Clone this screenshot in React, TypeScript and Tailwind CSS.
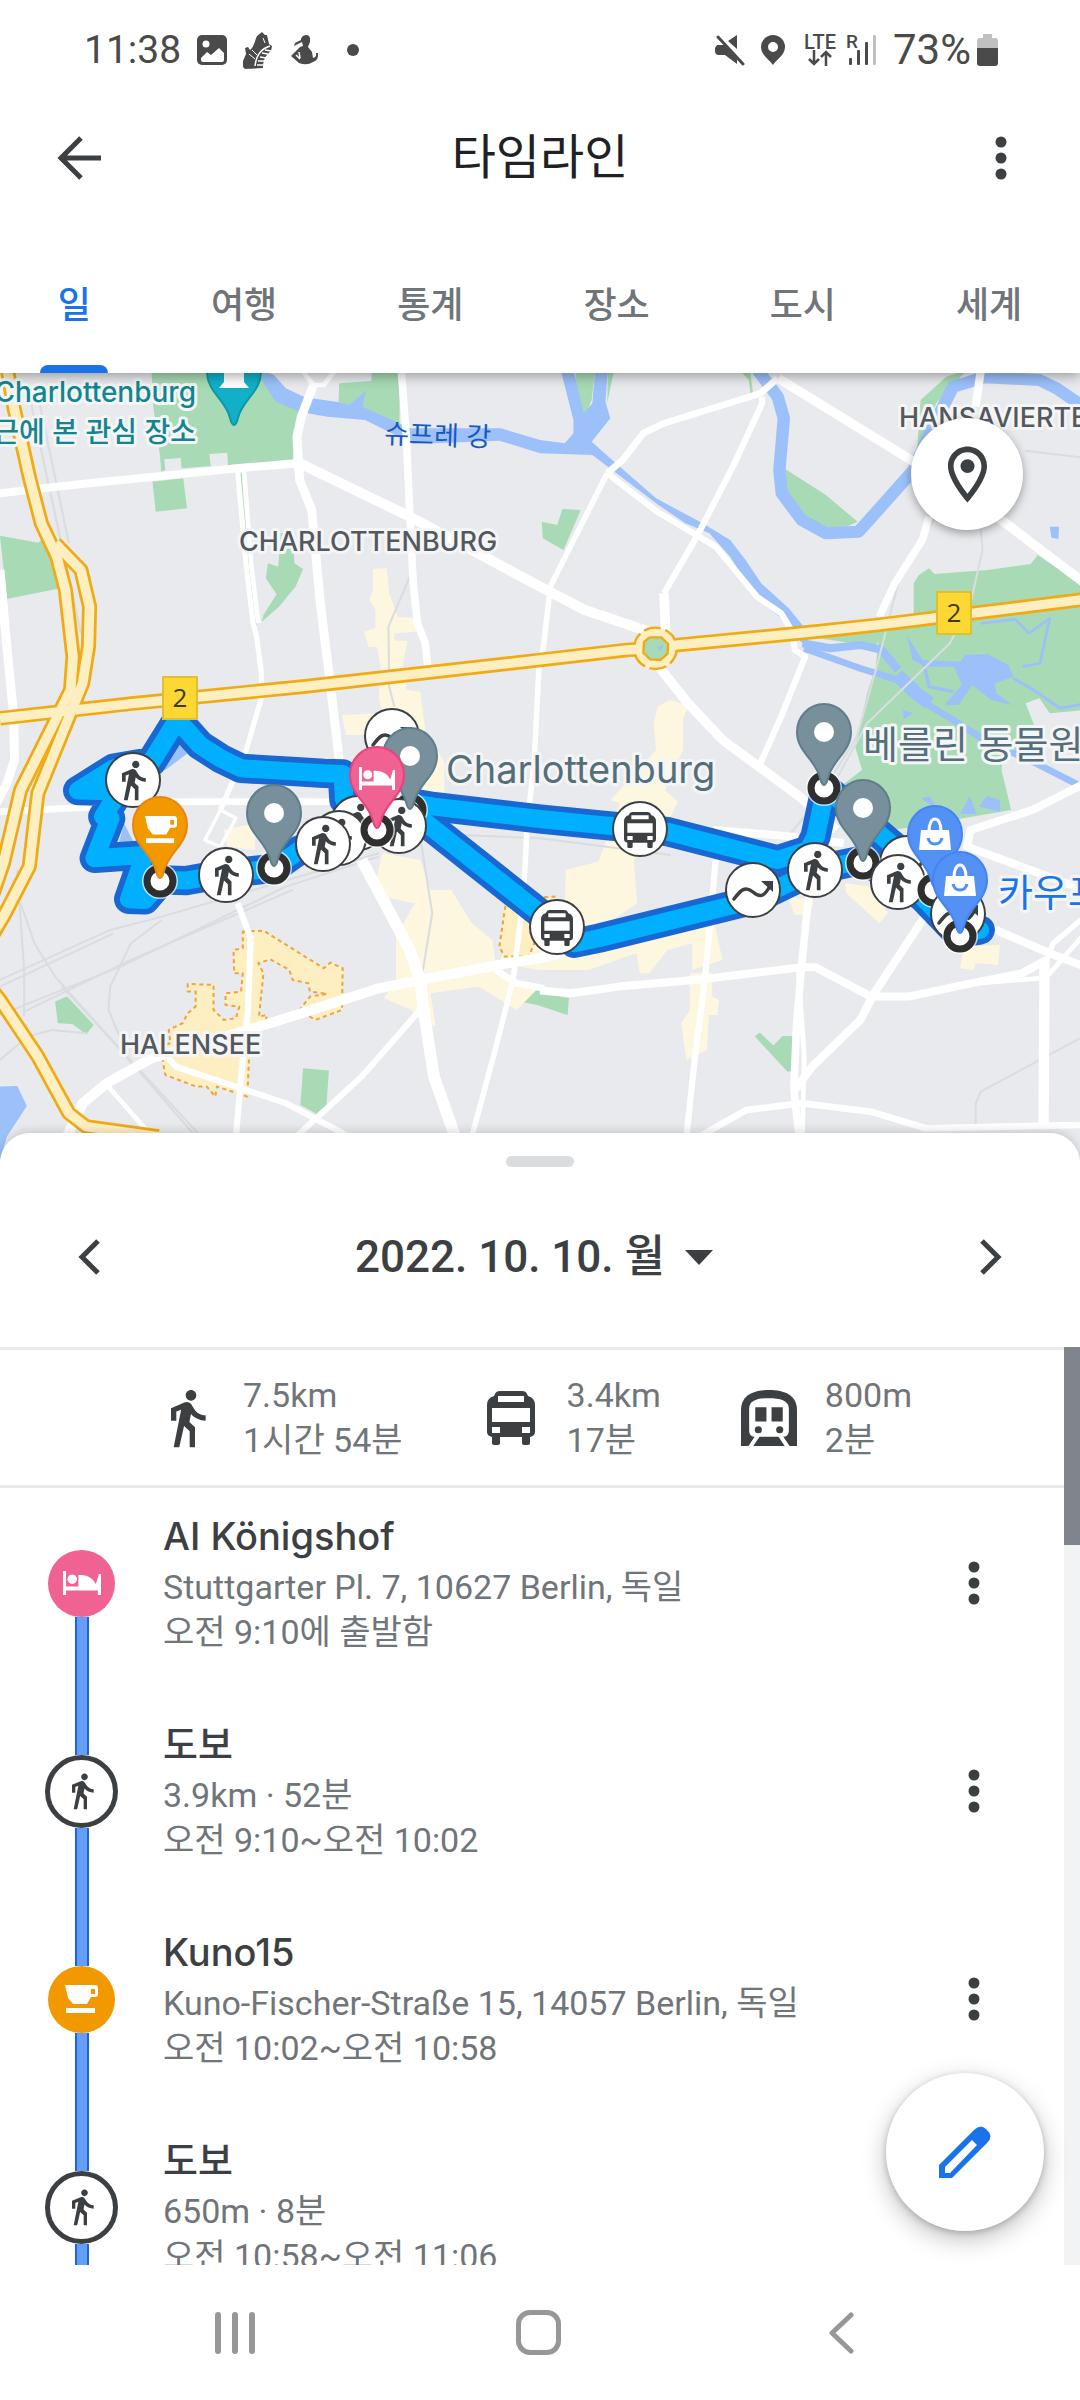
import type { ReactNode } from "react";
import { MdDirectionsWalk, MdOutlineLocationOn } from "react-icons/md";

const TABS = ["일", "여행", "통계", "장소", "도시", "세계"];

const STATS = [
  { kind: "walk", distance: "7.5km", time: "1시간 54분" },
  { kind: "bus", distance: "3.4km", time: "17분" },
  { kind: "train", distance: "800m", time: "2분" },
];

const ENTRIES = [
  { kind: "hotel", title: "AI Königshof", detail: "Stuttgarter Pl. 7, 10627 Berlin, 독일", time: "오전 9:10에 출발함" },
  { kind: "walk", title: "도보", detail: "3.9km · 52분", time: "오전 9:10~오전 10:02" },
  { kind: "cafe", title: "Kuno15", detail: "Kuno-Fischer-Straße 15, 14057 Berlin, 독일", time: "오전 10:02~오전 10:58" },
  { kind: "walk", title: "도보", detail: "650m · 8분", time: "오전 10:58~오전 11:06" },
];

// Road geometry, [stroke width, points]
const ROADS: [number, string][] = [
  [24, "0,370 210,345 690,295 870,280"],
  [30, "870,280 1190,440 1568,650 1698,720 1898,790"],
  [26, "910,45 875,140 862,200 870,330 905,420 930,700 960,950 985,1170"],
  [22, "1165,0 1180,200 1190,440 1200,640 1212,760 1235,820 1242,890"],
  [15, "690,300 715,590 735,760 745,800 758,900 760,980 715,1140 640,1320"],
  [14, "708,300 730,590 750,760"],
  [26, "0,600 20,830 40,1040 42,1170 20,1240 -10,1300"],
  [14, "880,5 910,45 940,45 970,5"],
  [20, "0,1325 300,1310 500,1295 960,1295"],
  [24, "2070,1380 2300,1400 2450,1420"],
  [10, "640,1320 685,1345 640,1430 595,1410 640,1320"],
  [18, "690,1600 728,1705 720,1920 700,2120 685,2300"],
  [30, "190,2310 240,2200 310,2140 440,2065 640,2005 830,1945 1100,1855 1220,1830 1500,1775 1568,1765 1640,1745"],
  [34, "1050,1470 1190,1740 1220,1830 1230,1920 1260,2120 1325,2310"],
  [18, "1220,1920 1050,2120 860,2300"],
  [18, "490,2065 510,2090 830,2200 1015,2300"],
  [14, "310,2145 425,2280"],
  [16, "1763,310 1598,650 1578,830 1565,890 1552,1160 1530,1380 1520,1580 1490,1830 1430,2070 1370,2300"],
  [20, "1440,1800 1500,1840 1580,1855"],
  [28, "2260,25 2653,275 2908,450 3028,545 3150,640"],
  [20, "2258,25 2208,70 1928,160 1868,190 1808,270 1763,310"],
  [18, "2213,80 2213,100 2128,290 2023,500 1928,670"],
  [28, "1928,670 1933,790"],
  [18, "1763,310 1908,425 2078,530 2198,680 2268,730 2298,780 2308,840 2338,860 2268,1040 2208,1180"],
  [24, "2848,0 2833,110"],
  [22, "2698,440 2678,510 2598,640 2553,740"],
  [28, "1913,890 1998,1000 2098,1110 2328,1285 2428,1380"],
  [24, "1568,1862 1658,1870 1798,1850 2038,1828 2328,1792 2368,1792 2528,1880 2638,1880 2798,1845 2968,1810 3038,1770"],
  [22, "2348,1580 2328,1780 2313,1960 2305,2160 2320,2300"],
  [14, "2318,1800 2335,2060 2330,2290"],
  [24, "2698,1620 2538,1870 2498,1950 2358,2090 2308,2160"],
  [18, "2078,1470 2048,1820 2018,2060 1993,2300"],
  [24, "3150,1240 2998,1320 2818,1380 2808,1430 3018,1510 3150,1560"],
  [24, "2858,1665 3048,1750 3150,1790"],
  [30, "3033,1770 3030,2270"],
  [16, "3150,1640 3058,1720 3035,1780"],
  [14, "3150,1690 3040,1820"],
  [20, "2030,2300 2168,2220 2328,2200 2528,2225 2688,2275 3150,2265"],
  [14, "2778,1845 3018,1825"],
];

const RAILS = [
  "0,1830 320,1680 470,1640 1100,1450",
  "0,1850 330,1690",
  "0,1935 350,1790 830,1550 1100,1460",
  "70,1925 380,1770 850,1560",
  "60,1600 100,1720 160,1820 350,2040 560,2290",
  "50,1500 70,1800 70,1940",
  "180,1850 360,2050 575,2290",
  "0,2070 80,2000 150,1980 250,1990",
  "320,1850 315,1920 380,2080",
  "320,1850 380,1720 470,1650",
  "90,100 235,790",
  "115,100 200,520",
  "1190,620 1128,770 1130,950 1145,1010",
  "1220,1400 1255,1630 1225,1820",
  "1340,1395 1568,1405 1948,1455",
  "2718,440 2618,600 2543,900 2488,1100 2368,1300 2288,1400",
  "2848,480 2853,540 2818,700 2758,820 2518,1060 2400,1280",
  "3136,2005 2848,2165 2833,2200 2833,2270",
  "2978,242 3136,262",
];

const HIGHWAYS = [
  "20,-10 40,110 85,320 120,460 165,560 190,660 212,860 205,960 60,1260 10,1480 -30,1600",
  "160,520 235,600 260,710 257,830 240,940 110,1270 85,1490 10,1640 -30,1710",
  "-30,1850 0,1890 110,2060 200,2230 250,2270 460,2300",
  "0,1045 390,1000 880,950 1568,870 1820,840 1903,835 1968,825 2368,785 2548,765 3150,688",
];

const ROUTES = [
  "1000,1290 995,1212 940,1210 860,1205 700,1195 640,1165 580,1125 515,1050 440,1175 330,1195 227,1262 345,1265 300,1340 320,1345 275,1465 420,1455 375,1588 420,1590 470,1530 540,1532 660,1510 795,1495 870,1440 960,1410 1095,1380",
  "1200,1300 1260,1310 1568,1347 1938,1385 2258,1470 2348,1440 2368,1400 2398,1255 2608,1440 2760,1640",
  "1220,1345 1568,1630 1668,1720 1738,1705 2188,1590 2268,1550 2368,1500 2508,1470 2678,1580 2780,1690 2845,1680",
];

function Poly({ fill, points }: { fill: string; points: string[] }) {
  return (
    <g fill={fill}>
      {points.map((p) => (
        <polygon key={p} points={p} />
      ))}
    </g>
  );
}

function BedIcon({ x = 0, y = 0, size = 37 }) {
  return (
    <svg x={x} y={y} width={size} height={(size * 24) / 37} viewBox="0 0 37 24" fill="#fff">
      <path d="M0 0h3v15h12V4c9-1 15 4 17 9l3-10h2v21h-3v-5H3v5H0z" />
      <circle cx="9" cy="8" r="4.6" />
    </svg>
  );
}

function CupIcon({ x = 0, y = 0, size = 33 }) {
  return (
    <svg x={x} y={y} width={size} height={(size * 28) / 33} viewBox="0 0 33 28" fill="#fff">
      <path fillRule="evenodd" d="M0 0h30q3 0 3 3v6q0 3-3 3h-4l-4 7H8L3 13zM26 4v5h4V4z" />
      <path d="M1 23h29v5H1z" />
    </svg>
  );
}

function BusIcon({ x = 0, y = 0, size = 48 }) {
  return (
    <svg x={x} y={y} width={size} height={(size * 54) / 48} viewBox="0 0 48 54" fill="#3c4043">
      <path
        fillRule="evenodd"
        d="M8 3q1-3 5-3h22q4 0 5 3l1 2q7 2 7 9v27q0 4-5 5v6q0 2-2 2h-4q-2 0-2-2v-6H13v6q0 2-2 2H7q-2 0-2-2v-6q-5-1-5-5V14q0-7 7-9zM11 5v6h26V5zM5 17v14h38V17zM5 36v6h8v-6zM35 36v6h8v-6z"
      />
    </svg>
  );
}

function TrainIcon() {
  return (
    <svg width="56" height="56" viewBox="0 0 55 55" fill="#3c4043">
      <path d="M0 55V20C0 5 12 0 27.500 0S55 5 55 20v35z" />
      <path fill="#fff" d="M8 40V18C8 10 17 8 27.500 8S47 10 47 18v22q0 6-6 6H14q-6 0-6-6z" />
      <path d="M14 17h11v14H14zM30 17h11v14H30z" />
      <circle cx="17" cy="39" r="3.500" />
      <circle cx="38" cy="39" r="3.500" />
      <path stroke="#fff" strokeWidth="4" d="M17 44l-8 12M38 44l8 12" />
    </svg>
  );
}

function MoreIcon() {
  return (
    <svg width="12" height="44" viewBox="0 0 12 44" fill="#3c4043">
      <circle cx="6" cy="6" r="5.500" />
      <circle cx="6" cy="22" r="5.500" />
      <circle cx="6" cy="38" r="5.500" />
    </svg>
  );
}

function Stop({ x, y, kind }: { x: number; y: number; kind: string }) {
  return (
    <g>
      <circle cx={x} cy={y} r="27" fill="#fff" stroke="#3c4043" strokeWidth="2" />
      {kind === "walk" && <MdDirectionsWalk x={x - 22} y={y - 22} size={44} color="#3c4043" />}
      {kind === "bus" && <BusIcon x={x - 16} y={y - 17} size={32} />}
      {kind === "wave" && (
        <g transform={`translate(${x} ${y})`}>
          <path d="M-19 9C-13 1-8-5 0 2S12 5 17-4" fill="none" stroke="#3c4043" strokeWidth="3.500" strokeLinecap="round" />
          <path d="M8-9h12V2z" fill="#3c4043" />
        </g>
      )}
    </g>
  );
}

function Ring({ x, y }: { x: number; y: number }) {
  return (
    <g>
      <circle cx={x} cy={y} r="18" fill="#fff" fillOpacity="0.700" />
      <circle cx={x} cy={y} r="13" fill="#fff" stroke="#2f2f2f" strokeWidth="7" />
    </g>
  );
}

function Pin({ x, y, fill, edge, children }: { x: number; y: number; fill: string; edge: string; children?: ReactNode }) {
  return (
    <g transform={`translate(${x} ${y})`}>
      <path
        d="M0 53C-2 53-3 50-4 46C-8 28-27 20-27 0A27 28 0 0 1 27 0C27 20 8 28 4 46C3 50 2 53 0 53Z"
        fill={fill}
        stroke={edge}
        strokeWidth="2"
      />
      {children ?? <circle cx="0" cy="0" r="10" fill="#fff" />}
    </g>
  );
}

function Bag() {
  return (
    <g>
      <path d="M-14-4h28l2 20h-32z" fill="#fff" />
      <path d="M-6-3c0-16 12-16 12 0" fill="none" stroke="#fff" strokeWidth="3" />
      <path d="M-7 4c2 8 12 8 14 0" fill="none" stroke="#4f8ff7" strokeWidth="3" />
    </g>
  );
}

function RoadShield({ x, y }: { x: number; y: number }) {
  return (
    <g>
      <rect x={x - 17} y={y - 21} width="34" height="42" fill="#fdd835" stroke="#dfbf35" strokeWidth="2" />
      <text x={x} y={y + 9} fontSize="26" textAnchor="middle" fill="#3c3a20" fontFamily='"Open Sans", sans-serif'>
        2
      </text>
    </g>
  );
}

function TimelineMap() {
  return (
    <svg className="block h-full w-full" viewBox="0 373 1080 787" preserveAspectRatio="xMidYMin slice" role="img" aria-label="지도">
      <rect y="373" width="1080" height="787" fill="#e8eaed" />
      <g transform="translate(0 370) scale(0.3444 0.3333)" strokeLinejoin="round">
        <Poly
          fill="#a8dab5"
          points={[
            "440,0 445,110 465,260 468,305 480,300 477,268 525,264 527,295 612,288 608,252 660,248 662,285 850,268 860,190 885,110 800,90 760,0",
            "443,335 532,325 543,415 452,425",
            "0,497 112,518 125,505 175,655 20,687",
            "815,490 850,490 855,580 880,597 858,650 810,710 760,755 765,735 803,673 772,625 778,580 808,590",
            "985,40 1078,33 1080,0 1160,0 1160,160 1060,120 983,97",
            "695,310 705,310 745,765 738,765",
            "1673,0 1728,0 1718,90 1698,140 1668,60",
            "1765,0 1783,0 1763,100",
            "2148,0 2178,0 2186,65 2180,75 2174,30",
            "2280,297 2398,375 2490,455 2458,470 2398,472 2343,450 2280,370",
            "2673,90 2748,20 2808,0 2718,100 2663,240",
            "1573,455 1618,465 1633,417 1686,420 1636,540 1576,505",
            "2653,640 2668,615 2698,595 2713,612 2868,600 2993,582 3013,555 3150,650 3150,1020 3048,1030 3018,985 2978,1000 3008,1080 2968,1140 2913,1150 2908,1200 2936,1320 2628,1375 2578,1380 2440,1250 2503,1200 2483,1130 2518,970 2543,890 2553,780 2653,760",
            "2348,800 2560,785 2543,830",
            "160,1895 195,1880 272,1965 250,1993 210,1962 168,1960",
            "880,2095 955,2102 948,2205 920,2232 872,2205",
            "1495,1845 1652,1885 1648,1935 1560,1905 1485,1890",
            "2192,2000 2206,1988 2246,2027 2272,1998 2305,1998 2298,2105 2286,2105",
          ]}
        />
        <Poly
          fill="#fef7e0"
          points={[
            "1083,597 1123,595 1130,670 1155,740 1210,745 1210,785 1145,790 1145,812 1183,812 1170,880 1180,960 1220,965 1235,1080 1290,1175 1290,1270 1200,1270 1100,1095 1005,1095 993,1035 1110,1030 1100,980 1105,890 1095,830 1070,830 1057,785 1090,775 1090,720 1072,690 1083,660",
            "1110,1450 1220,1470 1250,1560 1310,1560 1370,1660 1430,1710 1440,1790 1480,1830 1568,1850 1500,1920 1390,1850 1250,1870 1265,1970 1230,1960 1195,1920 1115,1885 1150,1830 1150,1700 1205,1600 1105,1580 1095,1520",
            "1910,1010 1945,990 1998,1005 1983,1050 1983,1140 1930,1260 1968,1295 1938,1360 1840,1470 1850,1600 1720,1690 2068,1630 2098,1770 2010,1800 2010,1720 1938,1740 1885,1810 1858,1810 1848,1750 1708,1800 1568,1800 1450,1780 1480,1700 1640,1620 1643,1500 1738,1475 1800,1300 1773,1290 1905,1140 1898,1060",
            "2003,1810 2068,1810 2068,1880 2088,1890 2083,1935 2058,1935 2053,2040 1993,2070 1978,1960 2003,1920",
            "2288,1580 2363,1590 2353,1635 2308,1635",
            "2453,1540 2528,1550 2578,1630 2553,1660 2458,1570",
            "2798,1730 2903,1725 2898,1785 2833,1780 2828,1800 2788,1795",
            "650,1380 740,1360 740,1440 660,1430",
          ]}
        />
        <g fill="#feefc3" stroke="#eda63a" strokeWidth="6" strokeDasharray="12 10">
          <polygon points="705,1685 765,1682 940,1795 960,1778 995,1795 993,1920 915,1950 870,1920 900,1880 950,1872 900,1865 895,1840 850,1830 840,1800 785,1768 750,1780 765,1810 752,1940 775,1935 770,1960 715,1970 725,2020 718,2180 630,2150 625,2180 600,2150 570,2150 480,2115 465,2030 495,2020 490,1980 530,1960 545,1930 568,1910 568,1865 545,1865 545,1842 620,1845 620,1920 650,1950 685,1945 695,1910 655,1905 655,1870 700,1865 705,1810 680,1810 678,1740 705,1735" />
          <polygon points="1470,1590 1610,1580 1560,1700 1535,1760 1465,1760 1450,1730" />
        </g>
        <Poly
          fill="#9cc0f9"
          points={[
            "760,0 795,15 830,55 885,82 985,97 1015,105 1062,62 1052,110 1150,155 1190,175 1455,175 1568,210 1640,220 1665,190 1665,150 1628,0 1665,0 1695,130 1720,100 1728,0 1765,0 1758,95 1772,145 1718,215 1800,290 1905,385 2040,460 2120,510 2165,570 2210,640 2290,715 2330,765 2345,825 2325,815 2300,770 2190,680 2150,610 2120,560 2060,490 1990,460 1905,400 1790,310 1720,255 1568,250 1450,212 1200,222 1060,150 950,140 870,125 800,95 760,30",
            "3048,470 3075,470 3073,507 3053,503",
            "2633,795 2678,870 2788,875 2803,855 2868,853 2928,885 2943,920 2888,940 2893,970 2938,1005 2878,990 2823,945 2783,1005 2743,1005 2793,945 2770,890 2690,890 2650,870",
            "2788,1332 2816,1278 2835,1332",
            "2843,1310 2865,1278 2903,1290 2903,1325",
            "2673,1285 2700,1280 2725,1320",
            "2622,1020 2650,1030 2624,1047",
            "0,2150 50,2148 78,2208 20,2300 0,2370",
            "515,1080 545,1150 480,1200 450,1200",
            "360,1360 400,1440 340,1440",
          ]}
        />
        <g fill="none" stroke="#9cc0f9">
          <polyline strokeWidth="36" points="2200,0 2258,80 2276,145 2263,300 2270,370 2328,450 2398,490 2493,485 2528,445 2653,300 2708,170 2768,50 2858,22 3018,30 3068,55 3160,120" />
          <polyline strokeWidth="24" points="2330,820 2410,835 2498,825 2560,840 2608,900" />
          <polyline strokeWidth="20" points="2335,835 2498,895 2608,930 2688,1000 2768,1050 2858,1110 3008,1180 3150,1255" />
          <polyline strokeWidth="40" points="2605,915 2660,970 2700,1000" />
          <polyline strokeWidth="10" points="2683,885 2698,950 2768,965" />
          <polyline strokeWidth="8" points="2848,760 2948,748 2988,790 3048,745 3020,880 2970,890" />
          <polyline strokeWidth="9" points="2943,925 3008,965 3078,1015 3150,1002" />
        </g>
        <g fill="none" stroke="#dadde0" strokeWidth="6">
          {RAILS.map((p) => (
            <polyline key={p} points={p} />
          ))}
        </g>
        <g fill="none" stroke="#fff">
          {ROADS.map(([w, p]) => (
            <polyline key={p} points={p} strokeWidth={w} />
          ))}
        </g>
        <g fill="none" stroke="#f0ab14" strokeWidth="44">
          {HIGHWAYS.map((p) => (
            <polyline key={p} points={p} />
          ))}
        </g>
        <circle cx="1903" cy="835" r="62" fill="#feefc3" stroke="#f0ab14" strokeWidth="7" strokeDasharray="50 14" />
        <g fill="none" stroke="#feefc3" strokeWidth="28">
          {HIGHWAYS.map((p) => (
            <polyline key={p} points={p} />
          ))}
        </g>
        <polygon points="1886,802 1920,802 1940,822 1938,852 1918,870 1888,868 1868,848 1870,816" fill="#a8dab5" stroke="#f0ab14" strokeWidth="7" />
        <path d="M1908 830l20-5-12 18z" fill="#9cc0f9" />
        <g fill="none" strokeLinecap="round">
          {ROUTES.map((p) => (
            <polyline key={p} points={p} stroke="#1967d2" strokeWidth="88" />
          ))}
          {ROUTES.map((p) => (
            <polyline key={p} points={p} stroke="#00b0ff" strokeWidth="54" />
          ))}
        </g>
      </g>

      <g stroke="#f3f5f6" strokeWidth="6" strokeLinejoin="round" paintOrder="stroke" fontFamily='Inter, "Noto Sans CJK KR", sans-serif'>
        <g fontSize="27" fontWeight="500" fill="#55585d">
          <text x="239" y="551">CHARLOTTENBURG</text>
          <text x="899" y="427">HANSAVIERTEL</text>
          <text x="120" y="1054">HALENSEE</text>
        </g>
        <g fontSize="28" fontWeight="500" fill="#12858f" textAnchor="end">
          <text x="196" y="402">Charlottenburg</text>
          <text x="196" y="442">최근에 본 관심 장소</text>
        </g>
        <text x="384" y="443" fontSize="27" fill="#185abc" stroke="none" transform="rotate(2 384 443)">
          슈프레 강
        </text>
        <g fontSize="38" fill="#546e7a">
          <text x="446" y="783">Charlottenburg</text>
          <text x="863" y="758">베를린 동물원</text>
        </g>
        <text x="998" y="906" fontSize="38" fill="#1a73e8">
          카우프하우스
        </text>
      </g>

      <Pin x={234} y={372} fill="#12b0c8" edge="#0e98a5">
        <path d="M-10-4H10V10L15 16H-15L-10 10Z" fill="#fff" />
      </Pin>
      <RoadShield x={180} y={698} />
      <RoadShield x={954} y={613} />

      <Stop x={133} y={780} kind="walk" />
      <Stop x={226} y={875} kind="walk" />
      <Stop x={392} y={736} kind="wave" />
      <Ring x={410} y={810} />
      <Stop x={358} y={823} kind="walk" />
      <Stop x={339} y={838} kind="walk" />
      <Stop x={323} y={844} kind="walk" />
      <Stop x={399} y={826} kind="walk" />
      <Stop x={640} y={829} kind="bus" />
      <Stop x={557} y={927} kind="bus" />
      <Stop x={753} y={890} kind="wave" />
      <Stop x={815} y={870} kind="walk" />
      <Stop x={907} y={863} kind="wave" />
      <Ring x={824} y={788} />
      <Ring x={863} y={863} />
      <Stop x={898} y={882} kind="walk" />
      <Ring x={934} y={890} />
      <Stop x={958} y={914} kind="wave" />
      <Ring x={160} y={881} />
      <Ring x={274} y={868} />
      <Ring x={377} y={830} />
      <Ring x={960} y={936} />
      <Pin x={410} y={756} fill="#78909c" edge="#607d8b" />
      <Pin x={377} y={775} fill="#f06292" edge="#ec407a">
        <BedIcon x={-18} y={-8} size={36} />
      </Pin>
      <Pin x={160} y={825} fill="#f29900" edge="#e8870c">
        <CupIcon x={-15} y={-9} size={32} />
      </Pin>
      <Pin x={274} y={813} fill="#78909c" edge="#607d8b" />
      <Pin x={824} y={732} fill="#78909c" edge="#607d8b" />
      <Pin x={863} y={808} fill="#78909c" edge="#607d8b" />
      <Pin x={935} y={834} fill="#5491f5" edge="#4285f4">
        <Bag />
      </Pin>
      <Pin x={960} y={880} fill="#5491f5" edge="#4285f4">
        <Bag />
      </Pin>
    </svg>
  );
}

function StatusBar() {
  return (
    <div className="flex h-[100px] items-center justify-between pr-[82px] pl-[84px] leading-none text-[#4a4a4a]">
      <div className="flex items-center gap-4">
        <span className="text-[39px]">11:38</span>
        <svg width="30" height="30" viewBox="0 0 30 30">
          <rect width="30" height="30" rx="5" fill="#4a4a4a" />
          <circle cx="9" cy="9" r="3.500" fill="#fff" />
          <path d="M4 23l6-6 4 3 8-7 5 5v7q0 2-2 2H6q-2 0-2-2z" fill="#fff" />
        </svg>
        <svg width="30" height="37" viewBox="0 0 30 37" fill="#4a4a4a">
          <path d="M0 29L3 22 2 16 5 15 7 18C11 15 12 8 14 4L19 0 22 3 24 3 26 12 29 14 28 19C22 24 20 28 20 36L2 37 0 35z" />
          <path d="M12 34C13 25 17 17 27 14M14 33h6M15 29h6M17 25l6 1M19 21l6 1M22 18l6 1" fill="none" stroke="#fff" strokeWidth="1.500" />
          <path d="M6 22l6 5M9 18l5 5M20 6l2 5" stroke="#fff" strokeWidth="1" />
        </svg>
        <svg width="30" height="32" viewBox="0 0 30 32" fill="#4a4a4a">
          <path d="M12 5q1-4 6-4 4 1 3 7l-2 5 4 5 1 6q4-1 3-5h2q1 7-5 9-6 4-14 1L2 22l9-9 3-1-1-4-8 4 1-3 6-3z" />
          <path d="M7 21l4 4M10 18l1 6" stroke="#fff" strokeWidth="1.500" />
        </svg>
        <span className="ml-3 h-3 w-3 rounded-full bg-[#4a4a4a]" />
      </div>
      <div className="flex items-center">
        <svg className="mr-4" width="30" height="32" viewBox="0 0 30 32" fill="#4a4a4a">
          <path d="M2 11h7l13 14v5l-12-9H4q-4 0-4-4v-3zM13 7l9-6v14z" />
          <path d="M3 3l25 27" stroke="#4a4a4a" strokeWidth="3" strokeLinecap="round" />
        </svg>
        <svg className="mr-[17px]" width="24" height="30" viewBox="0 0 24 30" fill="#4a4a4a">
          <path fillRule="evenodd" d="M12 0a12 12 0 0 0-12 12c0 8 8 12 12 18 4-6 12-10 12-18A12 12 0 0 0 12 0zm0 7a5 5 0 1 1 0 10 5 5 0 0 1 0-10z" />
        </svg>
        <div className="mr-2 flex w-9 flex-col items-center">
          <span className="text-[20px] leading-4 font-medium">LTE</span>
          <svg width="24" height="16" viewBox="0 0 24 16" fill="none" stroke="#4a4a4a" strokeWidth="2.500">
            <path d="M6 0v14M1 9l5 5 5-5M18 16V2M13 7l5-5 5 5" />
          </svg>
        </div>
        <svg className="mr-[17px]" width="30" height="32" viewBox="0 0 30 32" fill="#4a4a4a">
          <text x="0" y="14" fontSize="19" fontWeight="500">R</text>
          <rect x="3" y="24" width="3" height="7" rx="1" />
          <rect x="11" y="16" width="3" height="15" rx="1" />
          <rect x="19" y="8" width="3" height="23" rx="1" />
          <rect x="27" y="1" width="3" height="30" rx="1" fill="#c0c0c0" />
        </svg>
        <span className="mr-1.5 text-[42px]">73%</span>
        <svg width="21" height="32" viewBox="0 0 21 32">
          <path d="M6 0h9v4h3q3 0 3 3v8H0V7q0-3 3-3h3z" fill="#c0c0c0" />
          <path d="M0 14h21v15q0 3-3 3H3q-3 0-3-3z" fill="#4a4a4a" />
        </svg>
      </div>
    </div>
  );
}

function RailNode({ kind }: { kind: string }) {
  if (kind === "walk") {
    return (
      <div className="flex h-[73px] w-[73px] items-center justify-center rounded-full border-5 border-[#3c4043] bg-white">
        <MdDirectionsWalk size={40} color="#3c4043" />
      </div>
    );
  }
  const hotel = kind === "hotel";
  return (
    <div className={`flex h-[67px] w-[67px] items-center justify-center rounded-full ${hotel ? "bg-[#f06292]" : "bg-[#f29900]"}`}>
      {hotel ? <BedIcon size={38} /> : <CupIcon size={33} />}
    </div>
  );
}

const LINE = "w-3.5 border-x-2 border-[#1967d2] bg-[#669df6]";

export default function App() {
  return (
    <div className="flex h-screen flex-col overflow-hidden bg-white font-[Roboto,'Noto_Sans_CJK_KR',sans-serif]">
      <header className="relative z-10 shrink-0 bg-white shadow-[0_3px_12px_rgba(0,0,0,0.35)]">
        <StatusBar />
        <div className="flex h-[116px] items-center justify-between px-[57px]">
          <button aria-label="뒤로" className="w-11">
            <svg width="44" height="44" viewBox="0 0 44 44" fill="none" stroke="#3c4043" strokeWidth="5">
              <path d="M24 2L4 22l20 20M4 22h40" />
            </svg>
          </button>
          <h1 className="text-[48px] leading-none text-[#202124]">타임라인</h1>
          <button aria-label="옵션 더보기" className="flex w-11 justify-center">
            <MoreIcon />
          </button>
        </div>
        <nav className="flex h-[157px] justify-center">
          {TABS.map((tab, i) => (
            <button
              key={tab}
              className={`flex shrink-0 flex-col items-center justify-between px-[60px] pt-[63px] text-[36px] leading-[54px] font-medium ${
                i === 0 ? "text-[#1a73e8]" : "text-[#70757a]"
              }`}
            >
              {tab}
              {i === 0 && <span className="-mx-5 h-2 w-[68px] rounded-t-lg bg-[#1a73e8]" />}
            </button>
          ))}
        </nav>
      </header>

      <main className="flex min-h-0 flex-1 flex-col">
        <section className="relative h-[787px] shrink-0">
          <TimelineMap />
          <button
            aria-label="장소"
            className="absolute top-[45px] right-[57px] flex h-28 w-28 items-center justify-center rounded-full bg-white shadow-[0_3px_10px_rgba(0,0,0,0.35)]"
          >
            <MdOutlineLocationOn size={67} color="#3c4043" />
          </button>
        </section>

        <section className="relative -mt-[27px] flex min-h-0 flex-1 flex-col rounded-t-[30px] bg-white shadow-[0_-2px_10px_rgba(0,0,0,0.15)]">
          <div className="mx-auto mt-[23px] h-[11px] w-[68px] shrink-0 rounded-full bg-[#dadce0]" />
          <div className="flex h-[180px] shrink-0 items-center justify-between px-[77px]">
            <button aria-label="이전 날짜">
              <svg width="24" height="36" viewBox="0 0 24 36" fill="none" stroke="#3c4043" strokeWidth="5">
                <path d="M21 2L5 18l16 16" />
              </svg>
            </button>
            <button className="flex items-center gap-5 pr-3 text-[44px] leading-none font-medium text-[#3c4043]">
              2022. 10. 10. 월
              <svg width="28" height="15" viewBox="0 0 28 15" fill="#3c4043">
                <path d="M0 0h28L14 15z" />
              </svg>
            </button>
            <button aria-label="다음 날짜">
              <svg width="24" height="36" viewBox="0 0 24 36" fill="none" stroke="#3c4043" strokeWidth="5">
                <path d="M3 2l16 16L3 34" />
              </svg>
            </button>
          </div>

          <div className="flex min-h-0 flex-1 overflow-hidden">
            <div className="min-w-0 flex-1">
              <div className="flex h-[141px] items-center gap-20 border-y-3 border-[#e8eaed] pl-[159px]">
                {STATS.map((s) => (
                  <div key={s.kind} className="flex items-center gap-7 text-[34px] leading-[45px] text-[#70757a]">
                    <div className="flex w-14 justify-center">
                      {s.kind === "walk" && <MdDirectionsWalk size={64} color="#3c4043" className="shrink-0" />}
                      {s.kind === "bus" && <BusIcon />}
                      {s.kind === "train" && <TrainIcon />}
                    </div>
                    <p>
                      {s.distance}
                      <br />
                      {s.time}
                    </p>
                  </div>
                ))}
              </div>

              <ul>
                {ENTRIES.map((e, i) => (
                  <li key={e.time} className="flex h-52">
                    <div className="flex w-[163px] shrink-0 flex-col items-center">
                      <div className="flex h-[190px] flex-col items-center">
                        <div className={`flex-1 ${i === 0 ? "" : LINE}`} />
                        <RailNode kind={e.kind} />
                        <div className={`flex-1 ${LINE}`} />
                      </div>
                      <div className={`flex-1 ${LINE}`} />
                    </div>
                    <div className="flex h-[190px] min-w-0 flex-1 flex-col justify-center text-[34px] leading-[45px] text-[#70757a]">
                      <h2 className="mb-1 font-[Inter,'Noto_Sans_CJK_KR',sans-serif] text-[38px] leading-[50px] font-medium text-[#3c4043]">
                        {e.title}
                      </h2>
                      <p className="whitespace-nowrap">{e.detail}</p>
                      <p>{e.time}</p>
                    </div>
                    <button aria-label={`${e.title} 옵션`} className="mr-[84px] flex h-[190px] w-3 items-center">
                      <MoreIcon />
                    </button>
                  </li>
                ))}
              </ul>
            </div>
            <div className="w-4 shrink-0 bg-[#f1f3f4]">
              <div className="h-[198px] bg-[#80848c]" />
            </div>
          </div>

          <button
            aria-label="수정"
            className="absolute right-9 bottom-[34px] flex h-[158px] w-[158px] items-center justify-center rounded-full bg-white shadow-[0_8px_24px_rgba(0,0,0,0.25),0_2px_6px_rgba(0,0,0,0.2)]"
          >
            <svg width="52" height="52" viewBox="0 0 52 52" fill="#1a73e8">
              <path fillRule="evenodd" d="M0 39L35 4q7-7 13 0 7 6 0 13L13 52H0zM6 41v6h5l27-28-5-5z" />
            </svg>
          </button>
        </section>
      </main>

      <footer className="relative z-10 flex h-[135px] shrink-0 items-center bg-white pr-[88px] pl-[84px]">
        <button aria-label="최근 앱" className="flex flex-1 justify-center gap-[11px]">
          <span className="h-[42px] w-1.5 rounded-full bg-[#979797]" />
          <span className="h-[42px] w-1.5 rounded-full bg-[#979797]" />
          <span className="h-[42px] w-1.5 rounded-full bg-[#979797]" />
        </button>
        <button aria-label="홈" className="flex flex-1 justify-center">
          <span className="h-[45px] w-[45px] rounded-[14px] border-5 border-[#979797]" />
        </button>
        <button aria-label="뒤로 가기" className="flex flex-1 justify-center">
          <svg width="26" height="42" viewBox="0 0 26 42" fill="none" stroke="#979797" strokeWidth="5" strokeLinecap="round" strokeLinejoin="round">
            <path d="M23 3L4 21l19 18" />
          </svg>
        </button>
      </footer>
    </div>
  );
}
